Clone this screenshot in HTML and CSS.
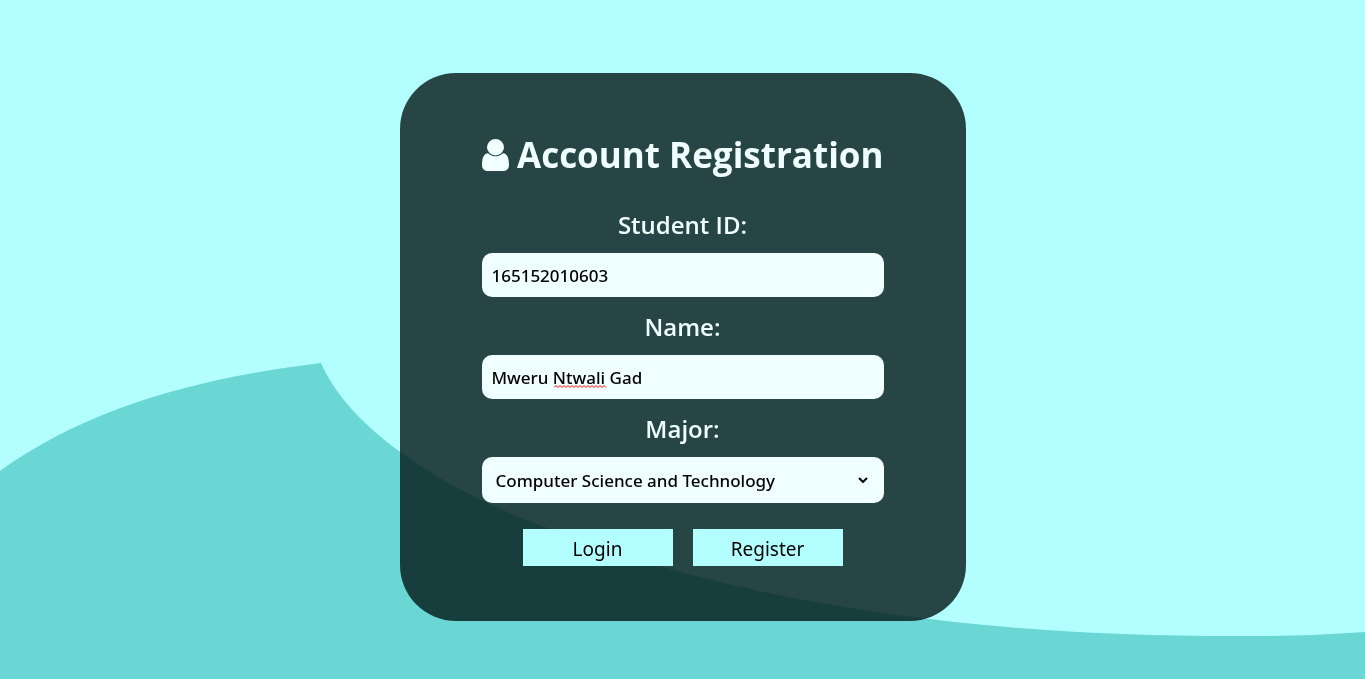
FILE: index.html
```html
<!DOCTYPE html>
<html lang="en">
<head>
<meta charset="utf-8">
<meta name="viewport" content="width=device-width, initial-scale=1">
<title>Account Registration</title>
<link rel="stylesheet" href="styles.css">
</head>
<body>
<svg class="wave" viewBox="0 0 1365 679" preserveAspectRatio="none" aria-hidden="true">
  <path d="M0 471C90 406 205 377 321 363C352 434 452 493 550 529C755 609 1000 638 1260 636Q1312 636 1365 632V679H0Z"/>
</svg>
<main class="page">
  <form class="card">
    <h1 class="title">
      <svg class="user-icon" viewBox="0 0 27 32" aria-hidden="true">
        <ellipse cx="13.500" cy="8.200" rx="8.500" ry="8.200"/>
        <path d="M6 14.200C1.500 14.600 0 19.500 0 26C0 29.500 2.200 32 5.500 32H21.500C24.800 32 27 29.500 27 26C27 19.500 25.500 14.600 21 14.200C16.800 18.300 10.200 18.300 6 14.200Z"/>
      </svg>
      <span>Account Registration</span>
    </h1>
    <div class="field">
      <label class="label" for="student-id">Student ID:</label>
      <input class="control" id="student-id" type="text" value="165152010603">
    </div>
    <div class="field">
      <label class="label" for="name">Name:</label>
      <div class="input-wrap">
        <input class="control" id="name" type="text" value="Mweru Ntwali Gad">
        <svg class="squiggle" viewBox="0 0 53 3" aria-hidden="true">
          <path d="M0 2.500L2 .5L4 2.500L6 .5L8 2.500L10 .5L12 2.500L14 .5L16 2.500L18 .5L20 2.500L22 .5L24 2.500L26 .5L28 2.500L30 .5L32 2.500L34 .5L36 2.500L38 .5L40 2.500L42 .5L44 2.500L46 .5L48 2.500L50 .5L52 2.500"/>
        </svg>
      </div>
    </div>
    <div class="field">
      <label class="label" for="major">Major:</label>
      <div class="input-wrap">
        <select class="control select" id="major">
          <option>Computer Science and Technology</option>
        </select>
        <svg class="chevron" viewBox="0 0 10 6" aria-hidden="true"><path d="M1 1L5 5L9 1"/></svg>
      </div>
    </div>
    <div class="actions">
      <button class="button" type="button">Login</button>
      <button class="button" type="button">Register</button>
    </div>
  </form>
</main>
</body>
</html>
```
FILE: styles.css
```css
* { box-sizing: border-box; }

body {
  margin: 0;
  background: #b3ffff;
  font-family: "Noto Sans", "Open Sans", sans-serif;
  color: #000;
}

.wave {
  position: fixed;
  inset: 0;
  z-index: -1;
  width: 100%;
  height: 100%;
  fill: #6ad7d5;
}

.page {
  display: flex;
  justify-content: center;
  min-height: 100vh;
  padding: 73px 16px 16px;
}

.card {
  align-self: flex-start;
  width: 100%;
  max-width: 566px;
  padding: 56px 82px 55px;
  border-radius: 56px;
  background: rgba(4, 22, 22, 0.8);
}

.title {
  display: flex;
  align-items: center;
  justify-content: space-between;
  margin: 0 0 26px;
  color: #f0ffff;
  font-family: "Open Sans", "Noto Sans", sans-serif;
  font-size: 35px;
  line-height: 52px;
  font-weight: 700;
  white-space: nowrap;
}

.user-icon {
  flex: none;
  width: 27px;
  height: 32px;
  fill: #f0ffff;
}

.field {
  display: flex;
  flex-direction: column;
  margin-bottom: 12px;
}

.label {
  margin-bottom: 10px;
  color: #f0ffff;
  font-family: "Open Sans", "Noto Sans", sans-serif;
  font-size: 24px;
  line-height: 36px;
  font-weight: 600;
  text-align: center;
}

.control {
  display: block;
  width: 100%;
  height: 44px;
  padding: 0 10px;
  border: 0;
  border-radius: 10px;
  background: #f0ffff;
  color: #000;
  font-family: inherit;
  font-size: 17px;
  font-weight: 500;
}

.input-wrap { position: relative; }

.select {
  height: 46px;
  padding: 0 14px;
  appearance: none;
}

.squiggle {
  position: absolute;
  left: 72px;
  top: 30px;
  width: 53px;
  height: 3px;
  fill: none;
  stroke: #f00;
}

.chevron {
  position: absolute;
  right: 16px;
  top: 20px;
  width: 10px;
  height: 6px;
  fill: none;
  stroke: #000;
  stroke-width: 2;
}

.actions {
  display: flex;
  justify-content: center;
  gap: 20px;
  margin-top: 26px;
}

.button {
  width: 150px;
  height: 37px;
  padding: 2px 0 0;
  border: 0;
  background: #b3ffff;
  color: #000;
  font-family: inherit;
  font-size: 19px;
}
```
